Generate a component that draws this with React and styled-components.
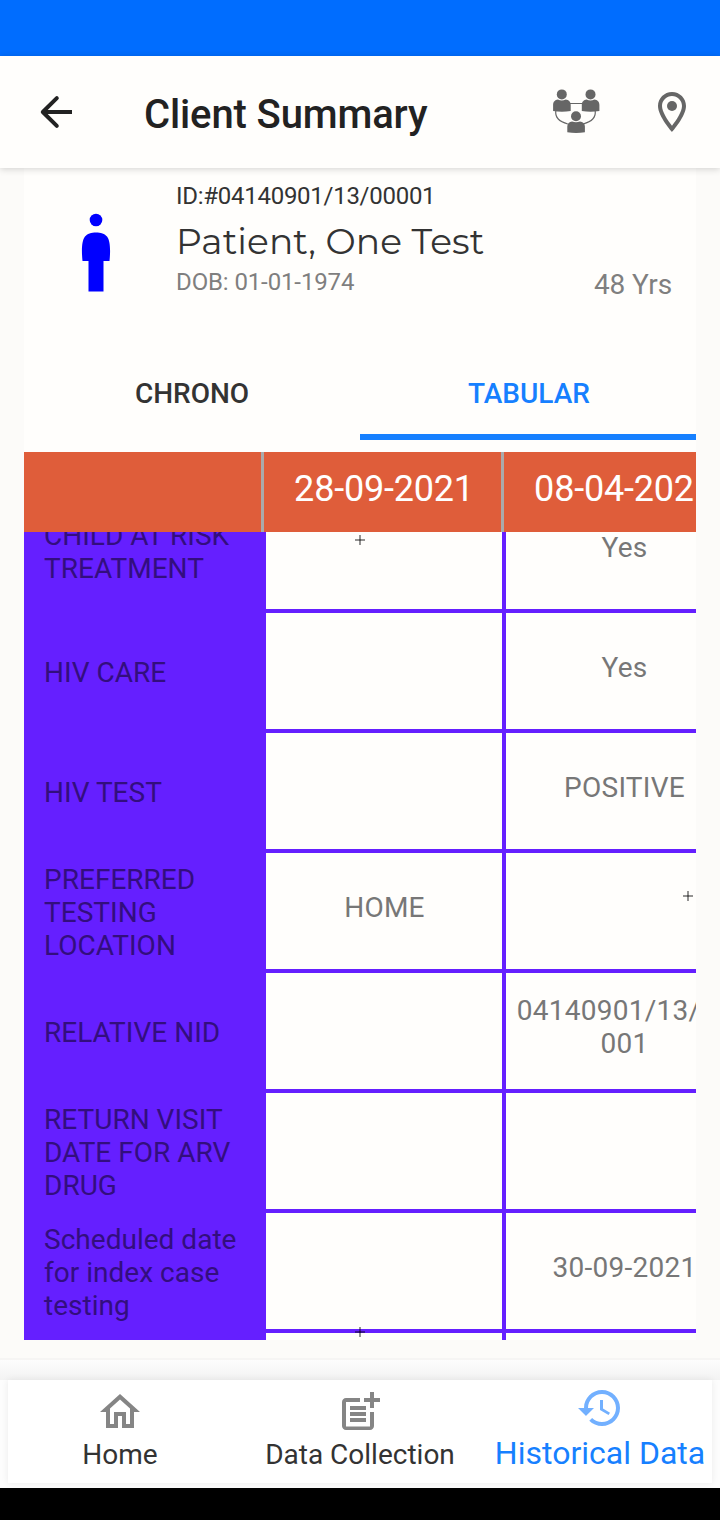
import styled, { createGlobalStyle } from "styled-components";

const GlobalStyle = createGlobalStyle`
  * {
    box-sizing: border-box;
  }
  body {
    margin: 0;
    background: #000;
    font-family: Roboto, "Noto Sans", sans-serif;
  }
`;

const dates = ["28-09-2021", "08-04-2021"];

const rows = [
  { label: "CHILD AT RISK TREATMENT", values: ["", "Yes"] },
  { label: "HIV CARE", values: ["", "Yes"] },
  { label: "HIV TEST", values: ["", "POSITIVE"] },
  { label: "PREFERRED TESTING LOCATION", values: ["HOME", ""] },
  { label: "RELATIVE NID", values: ["", "04140901/13/00\n001"] },
  { label: "RETURN VISIT DATE FOR ARV DRUG", values: ["", ""] },
  { label: "Scheduled date for index case testing", values: ["", "30-09-2021"] },
  { label: "", values: ["", ""] },
];

//small crosses floating over the grid, relative to the table body
const marks = [
  { x: 331, y: 3 },
  { x: 659, y: 359 },
  { x: 331, y: 795 },
];

const navItems = [
  {
    label: "Home",
    path: "M12 5.69l5 4.5V18h-2v-6H9v6H7v-7.81l5-4.5M12 3L2 12h3v8h6v-6h2v6h6v-8h3L12 3z",
  },
  {
    label: "Data Collection",
    path: "M17 19.22H5V7h7V5H5c-1.1 0-2 .9-2 2v12c0 1.1.9 2 2 2h12c1.1 0 2-.9 2-2v-7h-2v7.22zM19 2h-2v3h-3v2h3v3h2V7h3V5h-3V2zM7 9h8v2H7zM7 12h8v2H7zM7 15h8v2H7z",
  },
  {
    label: "Historical Data",
    active: true,
    path: "M13 3c-4.97 0-9 4.03-9 9H1l3.89 3.89.07.14L9 12H6c0-3.87 3.13-7 7-7s7 3.13 7 7-3.13 7-7 7c-1.93 0-3.68-.79-4.94-2.06l-1.42 1.42C8.27 19.99 10.51 21 13 21c4.97 0 9-4.03 9-9s-4.03-9-9-9zm-1 5v5l4.28 2.54.72-1.21-3.5-2.08V8H12z",
  },
];

const BackIcon = () => (
  <svg width="48" height="48" viewBox="0 0 48 48" fill="none" stroke="#222" strokeWidth="4">
    <path d="M40 24H11" />
    <path d="M24.800 10.200 10.800 24l14 13.800" strokeLinecap="round" strokeLinejoin="round" />
  </svg>
);

const ContactsIcon = () => (
  <svg width="48" height="48" viewBox="0 0 48 48" fill="#666">
    <path
      d="M16 15.500h16M3.800 23c-1 7 5 11 12 13M43.200 23c1 7-5 11-12 13"
      fill="none"
      stroke="#666"
      strokeWidth="1.200"
    />
    <circle cx="9.800" cy="6.400" r="5" />
    <path d="M1.100 23V17c0-3.500 2-5 4.800-5.500q3.900 1.800 7.800 0c3 .500 5 2 5 5.500v6q-8.800 1.400-17.600 0z" />
    <circle cx="38.500" cy="6.400" r="5" />
    <path d="M29.800 23V17c0-3.500 2-5 4.800-5.500q3.900 1.800 7.800 0c3 .500 5 2 5 5.500v6q-8.800 1.400-17.600 0z" />
    <circle cx="24" cy="28.200" r="5" />
    <path d="M15.300 44.300V38.500c0-3 2-4.500 4.800-5q3.900 1.600 7.800 0c3 .500 5 2 5 5v5.800q-8.800 1.500-17.600 0z" />
  </svg>
);

const PinIcon = () => (
  <svg width="48" height="48" viewBox="0 0 24 24" fill="#666">
    <path d="M12 2C8.130 2 5 5.130 5 9c0 5.250 7 13 7 13s7-7.750 7-13c0-3.870-3.130-7-7-7zM7 9c0-2.760 2.240-5 5-5s5 2.240 5 5c0 2.880-2.880 7.190-5 9.880C9.920 16.210 7 11.850 7 9z" />
    <circle cx="12" cy="9" r="2.500" />
  </svg>
);

const PersonIcon = () => (
  <svg width="30" height="80" viewBox="0 0 30 80" fill="#00f">
    <circle cx="15" cy="7" r="6.300" />
    <path d="M1.500 48C.500 38 .500 28 4 23.500 8 18 22 18 26 23.500c3.500 4.500 3.500 14.500 2.500 24.500h-6V78.500H7.500V48z" />
  </svg>
);

const App = () => {
  return (
    <Screen>
      <GlobalStyle />
      <StatusBar />
      <AppBar>
        <BackIcon />
        <Title>Client Summary</Title>
        <ContactsIcon />
        <PinIcon />
      </AppBar>
      <Content>
        <Patient>
          <Avatar>
            <PersonIcon />
          </Avatar>
          <div>
            <Detail $dark>ID:#04140901/13/00001</Detail>
            <Name>Patient, One Test</Name>
            <Detail>DOB: 01-01-1974</Detail>
          </div>
          <Age>48 Yrs</Age>
        </Patient>
        <Tabs>
          <Tab>CHRONO</Tab>
          <Tab $active>TABULAR</Tab>
        </Tabs>
        <TableHead>
          <HeadCell />
          {dates.map((date) => (
            <HeadCell key={date}>{date}</HeadCell>
          ))}
        </TableHead>
        <TableBody>
          <Rows>
            {rows.map(({ label, values }, i) => (
              <Row key={i}>
                <RowLabel>{label}</RowLabel>
                {values.map((value, j) => (
                  <Cell key={j}>{value}</Cell>
                ))}
              </Row>
            ))}
          </Rows>
          {marks.map(({ x, y }) => (
            <Mark key={x + "-" + y} style={{ left: x, top: y }} />
          ))}
        </TableBody>
      </Content>
      <BottomNav>
        <NavPanel>
          {navItems.map(({ label, path, active }) => (
            <NavItem key={label} $active={active}>
              <svg width="48" height="48" viewBox="0 0 24 24">
                <path d={path} />
              </svg>
              <span>{label}</span>
            </NavItem>
          ))}
        </NavPanel>
      </BottomNav>
    </Screen>
  );
};

const Screen = styled.div`
  width: 720px;
  height: 1520px;
  display: flex;
  flex-direction: column;
  overflow: hidden;
  background: #fcfbf9;
  border-bottom: 32px solid #000;
`;

const StatusBar = styled.div`
  height: 56px;
  flex: none;
  background: #006dff;
`;

const AppBar = styled.header`
  height: 112px;
  flex: none;
  display: flex;
  align-items: center;
  padding: 0 24px 0 32px;
  background: #fffefc;
  box-shadow: 0 1px 7px rgba(0, 0, 0, 0.18);
  position: relative;
  z-index: 1;
  svg {
    flex: none;
  }
  svg + svg {
    margin-left: 48px;
  }
`;

const Title = styled.h1`
  flex: 1;
  margin: 5px 0 0 64px;
  font-size: 40px;
  font-weight: 500;
  line-height: 48px;
  letter-spacing: -0.13px;
  color: #222;
`;

const Content = styled.main`
  height: 1172px;
  flex: none;
  margin: 0 24px;
  background: #fffefc;
  overflow: hidden;
`;

const Patient = styled.section`
  height: 178px;
  display: flex;
  padding: 14px 24px 0 57px;
`;

const Avatar = styled.div`
  width: 95px;
  padding-top: 31px;
`;

const Detail = styled.div`
  font-size: 24px;
  line-height: 28px;
  letter-spacing: ${({ $dark }) => ($dark ? "-0.27px" : "-0.12px")};
  color: ${({ $dark }) => ($dark ? "#333" : "#7f7f7f")};
`;

const Name = styled.div`
  height: 58px;
  padding-top: 9px;
  font-family: Montserrat, Lato, sans-serif;
  font-size: 36px;
  line-height: 44px;
  letter-spacing: 0.06px;
  white-space: nowrap;
  color: #333;
`;

const Age = styled.div`
  margin: 86px 0 0 auto;
  font-size: 28px;
  line-height: 33px;
  letter-spacing: -0.1px;
  color: #7f7f7f;
`;

const Tabs = styled.div`
  height: 106px;
  display: flex;
`;

const Tab = styled.div`
  width: 336px;
  flex: none;
  height: 94px;
  display: flex;
  align-items: center;
  justify-content: center;
  padding-top: ${({ $active }) => ($active ? "6px" : "0")};
  padding-left: ${({ $active }) => ($active ? "2px" : "0")};
  border-bottom: ${({ $active }) => ($active ? "6px solid #1680ff" : "none")};
  font-size: 28px;
  font-weight: 500;
  color: ${({ $active }) => ($active ? "#1680ff" : "#333")};
`;

const TableHead = styled.div`
  height: 80px;
  display: flex;
  background: #df5d3a;
  overflow: hidden;
`;

const HeadCell = styled.div`
  width: 240px;
  flex: none;
  padding: 16px 0 0 3px;
  border-right: 3px solid #aaa;
  font-size: 36px;
  line-height: 42px;
  letter-spacing: -0.2px;
  text-align: center;
  color: #fff;
`;

const TableBody = styled.div`
  height: 808px;
  position: relative;
  overflow: hidden;
`;

//the list is scrolled a little past the first row
const Rows = styled.div`
  margin-top: -41px;
`;

const Row = styled.div`
  height: 120px;
  display: flex;
`;

const RowLabel = styled.div`
  width: 240px;
  flex: none;
  display: flex;
  align-items: center;
  padding: 2px 20px 0;
  background: #651fff;
  font-size: 28px;
  line-height: 33px;
  letter-spacing: 0.02px;
  color: #330e7e;
`;

const Cell = styled.div`
  width: 240px;
  flex: none;
  display: flex;
  align-items: center;
  justify-content: center;
  padding: 0 0 8px 1px;
  border: 2px solid #651fff;
  font-size: 28px;
  line-height: 33px;
  letter-spacing: 0.25px;
  text-align: center;
  white-space: pre;
  color: #777;
`;

const Mark = styled.i`
  position: absolute;
  width: 10px;
  height: 10px;
  background: linear-gradient(rgba(0, 0, 0, 0.42), rgba(0, 0, 0, 0.42)) center / 10px 2px no-repeat,
    linear-gradient(rgba(0, 0, 0, 0.42), rgba(0, 0, 0, 0.42)) center / 2px 10px no-repeat;
`;

const BottomNav = styled.footer`
  height: 130px;
  flex: none;
  margin-top: 18px;
  padding: 20px 8px 5px;
  border-top: 2px solid #f6f5f4;
  background: #fdfdfd linear-gradient(#fdfdfd, #f3f3f3) top / 100% 20px no-repeat;
`;

const NavPanel = styled.nav`
  height: 103px;
  display: flex;
  justify-content: center;
  background: #fff;
  box-shadow: 0 0 7px rgba(0, 0, 0, 0.08);
`;

const NavItem = styled.div`
  width: 240px;
  flex: none;
  display: flex;
  flex-direction: column;
  align-items: center;
  padding-top: ${({ $active }) => ($active ? "4px" : "8px")};
  font-size: ${({ $active }) => ($active ? "32px" : "28px")};
  line-height: ${({ $active }) => ($active ? "42px" : "37px")};
  white-space: nowrap;
  color: ${({ $active }) => ($active ? "#1680ff" : "#333")};
  svg {
    flex: none;
    fill: ${({ $active }) => ($active ? "#72b0ff" : "#858585")};
  }
`;

export default App;
